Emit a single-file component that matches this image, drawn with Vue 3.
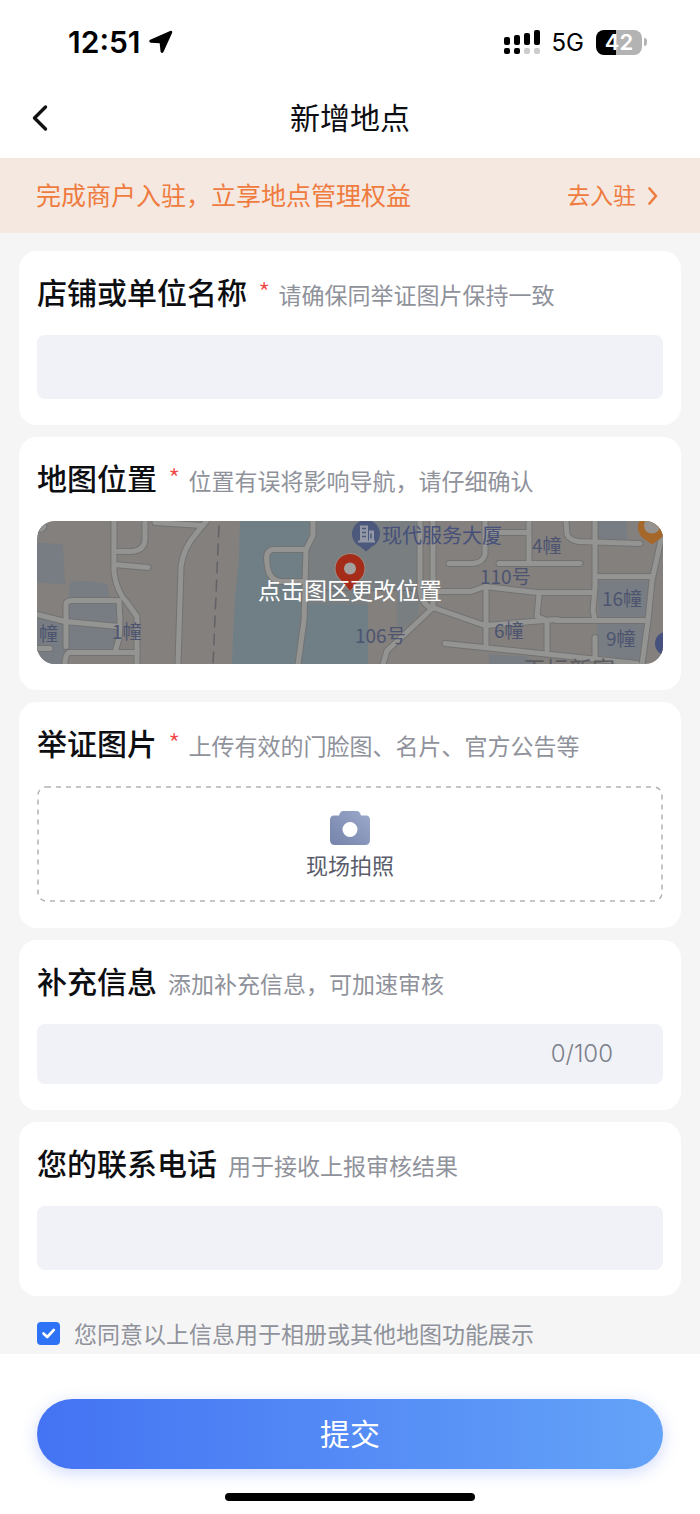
<script setup>
import { ref } from 'vue'

const shopName = ref('')
const extra = ref('')
const phone = ref('')
const agreed = ref(true)

const blocks = [
  'M0 22 L26 24 28 64 0 62Z',
  'M33 62 Q46 58 70 64 L73 78 32 78Z',
  'M31 80 L80 83 79 105 31 100Z',
  'M31 105 L79 107 76 131 31 133Z',
  'M0 96 L28 100 28 144 8 144 0 130Z',
  'M560 0 H590 V20 H560Z',
  'M560 60 H614 L612 96 562 98Z',
  'M560 102 L610 102 605 142 560 134Z',
  'M452 134 L490 136 500 144 452 144Z',
]

const roads = [
  'M77 0 V52 Q80 72 90 82 L100 96 100 144',
  'M81 31 H94 Q108 30 108 18 V0',
  'M77 44 L111 47',
  'M118 2 L166 5 M170 0 L160 12 Q146 28 144 46 L141 144',
  'M29 126 V84 Q29 80 35 80 H82 L83 100 82 118 78 132 32 132 Q28 134 28 144',
  'M0 94 L28 101 82 106 M0 128 H13 M80 132 H100 M0 8 Q6 10 7 6',
  'M276 0 V15 L269 29 267 100 261 144',
  'M269 29 H236 Q228 30 230 42 Q231 60 244 61 H268',
  'M383 0 L383 70 Q384 84 396 88 M396 0 V60 L396 87 Q370 112 350 130 L346 144',
  'M396 87 L448 105 520 99 M396 71 L434 71 448 66 500 72 554 72',
  'M448 0 V34 Q446 42 436 43 H412 M462 43 H543 M448 12 H492 M492 0 V43',
  'M529 0 L530 14 Q533 20 542 21 L603 23',
  'M558 0 V66 L556 90 558 100 M558 56 H616 M626 10 L615 60 611 100 605 144',
  'M519 100 H611 M449 66 V124 M502 74 L500 96 510 100 510 130',
  'M408 123 L600 143 M558 117 V138',
]

const labels = [
  { text: '现代服务大厦', x: 345, y: 22, cls: 'poi' },
  { text: '4幢', x: 495, y: 32 },
  { text: '110号', x: 443, y: 63 },
  { text: '16幢', x: 565, y: 85 },
  { text: '9幢', x: 569, y: 125 },
  { text: '6幢', x: 457, y: 117 },
  { text: '106号', x: 318, y: 122 },
  { text: '1幢', x: 75, y: 118 },
  { text: '幢', x: 2, y: 120 },
]
</script>

<template>
  <div class="page">
    <div class="status">
      <div class="status-side">
        <span class="time">12:51</span>
        <svg width="24" height="24" viewBox="0 0 24 24" aria-hidden="true">
          <path d="M1.500 10.400 21.400 1.600Q23 1.200 22.400 2.800L13.800 21.600Q12.800 23.200 12.200 21.300L11.400 13.200Q11.300 12.500 10.600 12.500L2 12Q.2 11.300 1.500 10.400Z" stroke="#000" stroke-width="1.400" stroke-linejoin="round" />
        </svg>
      </div>
      <div class="status-side">
        <svg width="36" height="24" viewBox="0 0 36 24" aria-hidden="true">
          <rect x="0" y="7" width="6" height="8" rx="2" />
          <rect x="10" y="5" width="6" height="10" rx="2" />
          <rect x="20" y="3" width="6" height="12" rx="2" />
          <rect x="30" y="0" width="6" height="15" rx="2" />
          <rect x="0" y="18" width="6" height="6" rx="2" />
          <rect x="10" y="18" width="6" height="6" rx="2" />
          <rect x="20" y="18" width="6" height="6" rx="2" fill="#ccc" />
          <rect x="30" y="18" width="6" height="6" rx="2" fill="#ccc" />
        </svg>
        <span class="net">5G</span>
        <div class="battery"><span class="level">42</span><span class="nub"></span></div>
      </div>
    </div>

    <header class="nav">
      <button class="back" type="button" aria-label="返回">
        <svg width="16" height="28" viewBox="0 0 16 28" aria-hidden="true">
          <path d="M13.500 3 2.500 14 13.500 25" fill="none" stroke="#111" stroke-width="3.400" stroke-linecap="round" stroke-linejoin="round" />
        </svg>
      </button>
      <h1>新增地点</h1>
    </header>

    <div class="banner">
      <span class="banner-text">完成商户入驻，立享地点管理权益</span>
      <a class="banner-link" href="#"><span>去入驻</span>
        <svg width="10" height="18" viewBox="0 0 10 18" aria-hidden="true">
          <path d="M1.500 1.500 8 9 1.500 16.500" fill="none" stroke="#ef7b3e" stroke-width="2.600" stroke-linecap="round" stroke-linejoin="round" />
        </svg>
      </a>
    </div>

    <form class="form" @submit.prevent>
      <section class="card">
        <div class="head">
          <label class="title" for="shop">店铺或单位名称</label>
          <span class="star">*</span>
          <span class="hint">请确保同举证图片保持一致</span>
        </div>
        <input id="shop" v-model="shopName" class="field" type="text" />
      </section>

      <section class="card">
        <div class="head">
          <h2 class="title">地图位置</h2>
          <span class="star">*</span>
          <span class="hint">位置有误将影响导航，请仔细确认</span>
        </div>
        <button class="map" type="button">
          <svg class="map-art" viewBox="0 0 626 144" preserveAspectRatio="xMidYMid slice" aria-hidden="true">
            <rect width="626" height="144" fill="#83807e" />
            <path d="M203 0H273L270 30 268 144H195Q197 80 202 40Z" fill="#707f86" />
            <path d="M276 0H380V70H331V144H262L269 90 270 30Z" fill="#797e81" />
            <path d="M268 84H331V144H261Z" fill="#707f86" />
            <path d="M360 70H382V106H360Z" fill="#797e81" />
            <path v-for="d in blocks" :key="d" :d="d" fill="#777d82" />
            <path d="M182 5 176 144" stroke="#626266" stroke-width="1.500" stroke-dasharray="12 6" fill="none" />
            <path d="M268 70H331M331 70H383" stroke="#6a6c70" fill="none" />
            <g fill="none" stroke-linecap="round" stroke-linejoin="round">
              <path v-for="d in roads" :key="d" :d="d" stroke="#737273" stroke-width="7" />
              <path v-for="d in roads" :key="d" :d="d" stroke="#949493" stroke-width="5" />
            </g>
            <text v-for="l in labels" :key="l.text" :x="l.x" :y="l.y" class="map-label" :class="l.cls">{{ l.text }}</text>
            <text x="486" y="157" class="map-area">天坛新家</text>
            <path d="M329 31 323 26A14 14 0 1 1 335 26Z" fill="#4c587c" />
            <path d="M323 5h8v15h-8zM332 10h5v10h-5zM321 20h17v2h-17z" fill="#9298a5" />
            <path d="M325 8h4M325 12h4M325 16h4M334 13v5" stroke="#4c587c" stroke-width="1.500" />
            <path d="M615 24 608 19A14 14 0 1 1 622 19Z" fill="#a5672a" />
            <circle cx="615" cy="5" r="8" fill="#96928f" />
            <circle cx="630" cy="123" r="12" fill="#46517d" />
            <path d="M313 71 304 60A15 15 0 1 1 322 60Z" fill="#a52c19" stroke="#9a8f8b" />
            <circle cx="313" cy="48" r="6" fill="#a3a19f" />
          </svg>
          <span class="map-tip">点击图区更改位置</span>
        </button>
      </section>

      <section class="card">
        <div class="head">
          <h2 class="title">举证图片</h2>
          <span class="star">*</span>
          <span class="hint">上传有效的门脸图、名片、官方公告等</span>
        </div>
        <button class="upload" type="button">
          <svg class="dash" aria-hidden="true">
            <rect x="1" y="1" rx="8" />
          </svg>
          <svg width="40" height="34" viewBox="0 0 40 34" aria-hidden="true">
            <defs>
              <linearGradient id="cam" x1="1" y1="0" x2="0" y2="1">
                <stop offset="0" stop-color="#9caacb" />
                <stop offset="1" stop-color="#7582aa" />
              </linearGradient>
            </defs>
            <path fill="url(#cam)" fill-rule="evenodd" d="M13 0H27Q29 0 30 2L31 4.500H36Q40 4.500 40 9V29Q40 34 35 34H5Q0 34 0 29V9Q0 4.500 4 4.500H9L10 2Q11 0 13 0ZM20 11A7.500 7.500 0 1 0 20 26A7.500 7.500 0 1 0 20 11Z" />
          </svg>
          <span>现场拍照</span>
        </button>
      </section>

      <section class="card">
        <div class="head">
          <label class="title" for="extra">补充信息</label>
          <span class="hint">添加补充信息，可加速审核</span>
        </div>
        <div class="field counted">
          <input id="extra" v-model="extra" type="text" maxlength="100" />
          <span class="count">{{ extra.length }}/100</span>
        </div>
      </section>

      <section class="card">
        <div class="head">
          <label class="title" for="phone">您的联系电话</label>
          <span class="hint">用于接收上报审核结果</span>
        </div>
        <input id="phone" v-model="phone" class="field" type="tel" />
      </section>

      <label class="agree">
        <input v-model="agreed" type="checkbox" />
        <svg class="tick" width="23" height="23" viewBox="0 0 23 23" aria-hidden="true">
          <rect width="23" height="23" rx="4" :fill="agreed ? '#2e73f5' : '#fff'" />
          <path d="M6.500 11.500 10.200 15 16.800 8" fill="none" stroke="#fff" stroke-width="2.600" stroke-linecap="round" stroke-linejoin="round" />
        </svg>
        <span>您同意以上信息用于相册或其他地图功能展示</span>
      </label>

      <footer class="footer">
        <button class="submit" type="submit">提交</button>
        <div class="home"></div>
      </footer>
    </form>
  </div>
</template>

<style>
body {
  background: #fff;
}
</style>

<style scoped>
.page {
  font-family: "Noto Sans CJK SC", sans-serif;
  color: #0d0e12;
  background: #fff;
}
.page * {
  box-sizing: border-box;
}
button,
input {
  font-family: inherit;
  border: 0;
  padding: 0;
  margin: 0;
}
button {
  cursor: pointer;
}
.status {
  display: flex;
  justify-content: space-between;
  align-items: center;
  height: 78px;
  padding: 6px 53px 0 68px;
  font-family: Inter, sans-serif;
  color: #000;
}
.status-side {
  display: flex;
  align-items: center;
}
.time {
  font-size: 30px;
  font-weight: 600;
  margin-right: 8px;
}
.net {
  font-size: 24px;
  margin: 0 12px;
}
.battery {
  display: flex;
  align-items: center;
  gap: 2px;
}
.level {
  width: 46px;
  height: 25px;
  border-radius: 8px;
  background: linear-gradient(90deg, #000 43%, #b3b3b3 43%);
  color: #fff;
  font-size: 22px;
  line-height: 25px;
  font-weight: 600;
  text-align: center;
}
.nub {
  width: 3px;
  height: 8px;
  border-radius: 0 3px 3px 0;
  background: #b3b3b3;
}
.nav {
  display: grid;
  grid-template-columns: 1fr auto 1fr;
  align-items: center;
  height: 80px;
  padding: 0 32px;
}
.back {
  display: flex;
  justify-self: start;
  background: none;
}
h1 {
  margin: 0;
  padding-bottom: 4px;
  font-size: 30px;
  line-height: 44px;
  font-weight: 400;
}
.banner {
  display: flex;
  justify-content: space-between;
  align-items: center;
  height: 75px;
  padding: 0 42px 0 36px;
  background: #f4e8e0;
  color: #ef7b3e;
}
.banner span {
  padding-bottom: 4px;
}
.banner-text {
  font-size: 25px;
}
.banner-link {
  display: flex;
  align-items: center;
  gap: 12px;
  font-size: 23px;
  color: inherit;
  text-decoration: none;
}
.form {
  display: flex;
  flex-direction: column;
  gap: 12px;
  padding-top: 18px;
  background: #f5f5f5;
}
.card {
  margin: 0 19px;
  padding: 0 18px 26px;
  border-radius: 18px;
  background: #fff;
}
.head {
  display: flex;
  align-items: baseline;
  height: 84px;
  padding-top: 18px;
  line-height: 44px;
  white-space: nowrap;
}
.title {
  margin: 0 11px 0 0;
  font-size: 30px;
  font-weight: 500;
}
.star {
  margin-right: 8px;
  font-size: 28px;
  font-weight: 300;
  color: #f04848;
}
.hint {
  font-size: 23px;
  color: #8f929b;
}
.field {
  display: block;
  width: 100%;
  height: 64px;
  padding: 0 20px;
  border-radius: 8px;
  background: #f0f2f7;
  font-size: 24px;
}
.counted {
  display: flex;
  align-items: center;
  height: 60px;
  padding: 0 50px 2px 20px;
}
.counted input {
  flex: 1;
  min-width: 0;
  height: 100%;
  background: none;
  font-size: 24px;
}
.count {
  font-family: Inter, sans-serif;
  font-weight: 300;
  color: #7c7f89;
}
.map {
  position: relative;
  display: flex;
  align-items: center;
  justify-content: center;
  width: 100%;
  height: 143px;
  padding-bottom: 8px;
  border-radius: 18px;
  overflow: hidden;
}
.map-art {
  position: absolute;
  inset: 0;
  width: 100%;
  height: 100%;
}
.map-label {
  font-size: 19px;
  fill: #4d5470;
}
.poi {
  font-size: 20px;
  fill: #46507a;
}
.map-area {
  font-size: 23px;
  fill: #5c5c60;
}
.map-tip {
  position: relative;
  font-size: 23px;
  color: #fff;
}
.upload {
  position: relative;
  display: flex;
  flex-direction: column;
  align-items: center;
  justify-content: center;
  gap: 2px;
  width: 100%;
  height: 116px;
  padding-top: 4px;
  background: none;
  font-size: 22px;
  line-height: 34px;
  color: #5a5d6b;
}
.dash {
  position: absolute;
  inset: 0;
  width: 100%;
  height: 100%;
}
.dash rect {
  width: calc(100% - 2px);
  height: calc(100% - 2px);
  fill: none;
  stroke: #b3b3b5;
  stroke-width: 1.5px;
  stroke-dasharray: 5 5;
}
.agree {
  display: flex;
  align-items: center;
  gap: 14px;
  height: 46px;
  padding: 4px 37px 0;
  font-size: 23px;
  line-height: 34px;
  color: #8f929b;
}
.agree input {
  position: absolute;
  width: 23px;
  height: 23px;
  opacity: 0;
}
.footer {
  display: flex;
  flex-direction: column;
  align-items: center;
  gap: 24px;
  margin-top: -12px;
  padding: 45px 37px 13px;
  background: #fff;
}
.submit {
  width: 100%;
  height: 70px;
  padding-bottom: 4px;
  border-radius: 35px;
  background: linear-gradient(90deg, #4473f3, #64a3f8);
  box-shadow: 0 4px 16px rgba(70, 110, 245, 0.25);
  color: #fff;
  font-size: 30px;
}
.home {
  width: 250px;
  height: 8px;
  border-radius: 4px;
  background: #000;
}
</style>
